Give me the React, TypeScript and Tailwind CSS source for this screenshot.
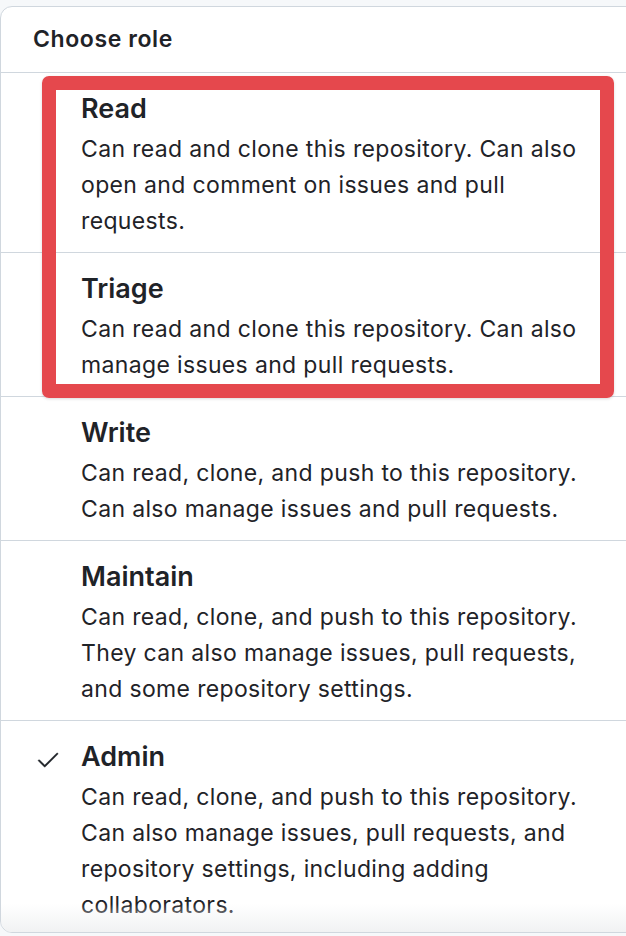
import React from "react";

type Role = {
  name: string;
  lines: string[];
  selected?: boolean;
};

const roles: Role[] = [
  {
    name: "Read",
    lines: [
      "Can read and clone this repository. Can also",
      "open and comment on issues and pull",
      "requests.",
    ],
  },
  {
    name: "Triage",
    lines: ["Can read and clone this repository. Can also", "manage issues and pull requests."],
  },
  {
    name: "Write",
    lines: ["Can read, clone, and push to this repository.", "Can also manage issues and pull requests."],
  },
  {
    name: "Maintain",
    lines: [
      "Can read, clone, and push to this repository.",
      "They can also manage issues, pull requests,",
      "and some repository settings.",
    ],
  },
  {
    name: "Admin",
    lines: [
      "Can read, clone, and push to this repository.",
      "Can also manage issues, pull requests, and",
      "repository settings, including adding",
      "collaborators.",
    ],
    selected: true,
  },
];

const CheckIcon = () => (
  <svg width="26" height="26" viewBox="0 0 24 24" fill="#1f2328" aria-hidden="true">
    <path d="M21.03 5.72a.75.75 0 0 1 0 1.06l-11.5 11.5a.75.75 0 0 1-1.06 0l-5.25-5.25a.75.75 0 1 1 1.06-1.06l4.72 4.72 10.97-10.97a.75.75 0 0 1 1.06 0Z" stroke="#1f2328" strokeWidth="0.4" />
  </svg>
);

export default function App() {
  return (
    <div
      className="min-h-screen bg-[#f6f8fa] pt-[6px] text-[#1f2328]"
      style={{ fontFamily: "Inter, 'Noto Sans', 'Liberation Sans', sans-serif" }}
    >
      <div className="relative ml-0 w-[640px] h-[927px] overflow-hidden rounded-l-xl border border-[#d0d7de] bg-white">
        <div className="h-[66px] border-b border-[#d0d7de] pl-[32px] flex items-center">
          <span className="text-[23px] font-semibold tracking-[0.6px]">Choose role</span>
        </div>

        <div className="relative">
          {roles.map((r, i) => (
            <div
              key={r.name}
              className={`flex pt-[20px] pb-[13px] ${i < roles.length - 1 ? "border-b border-[#d0d7de]" : ""}`}
            >
              <div className="w-[80px] shrink-0 pl-[34px] pt-[6px]">{r.selected && <CheckIcon />}</div>
              <div>
                <div className="text-[27px] leading-[32px] font-semibold">{r.name}</div>
                <div className="mt-[6px] text-[23px] leading-[36px] tracking-[0.35px]">
                  {r.lines.map((l) => (
                    <div key={l}>{l}</div>
                  ))}
                </div>
              </div>
            </div>
          ))}

          {/* annotation box over Read + Triage */}
          <div className="absolute left-[41px] top-[3px] w-[572px] h-[322px] rounded-[7px] border-[14px] border-[#e5484d] shadow-[0_1px_3px_rgba(0,0,0,0.15)]" />
        </div>

        <div className="absolute bottom-0 left-0 right-0 h-[28px] bg-gradient-to-b from-white/0 to-[#f1f2f3]" />
      </div>
    </div>
  );
}
